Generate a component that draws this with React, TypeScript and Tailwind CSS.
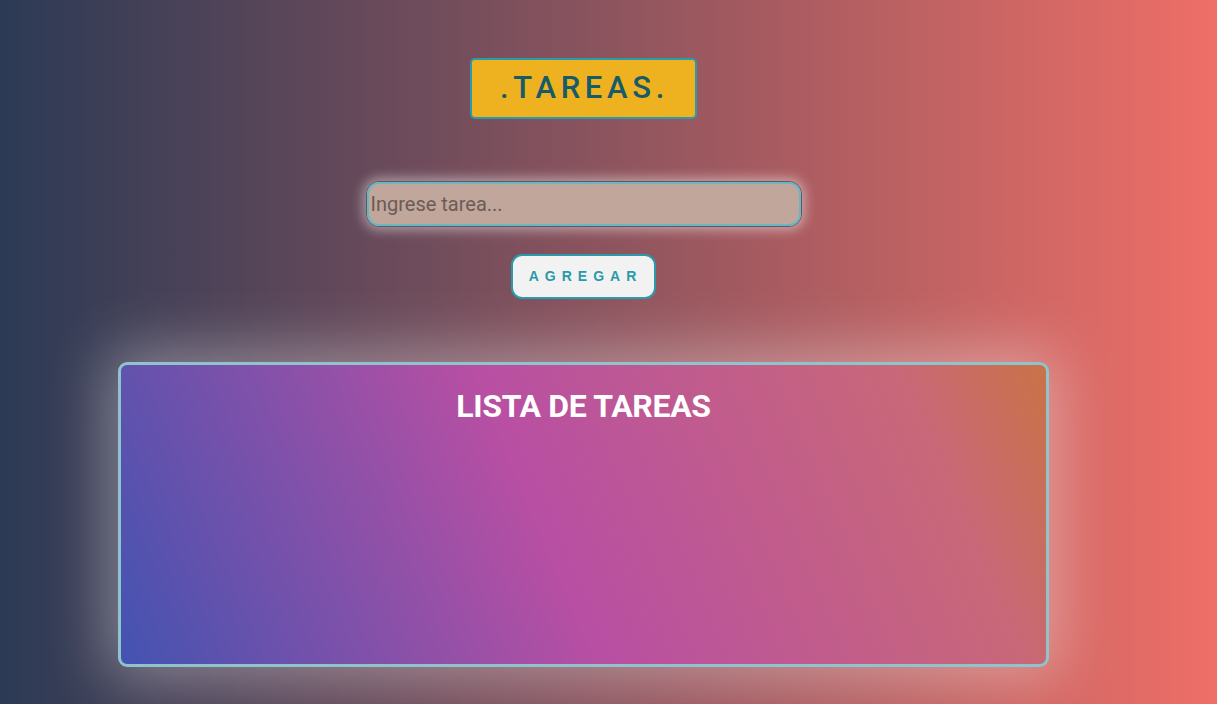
export default function App() {
    return (
        <div className="min-h-[704px] w-full overflow-hidden bg-[linear-gradient(to_right,#2c3a55,#8d545e_50%,#ee6f67)] font-['Roboto',sans-serif]">
            <div className="w-[1167px] flex flex-col items-center pt-[58px]">
                <h1 className="w-[227px] h-[61px] flex items-center justify-center bg-[#eeb120] border-2 border-[#2b9aaa] rounded-[5px] text-[31px] tracking-[0.15em] pl-[2px] text-[#175a68] font-medium">
                    .TAREAS.
                </h1>

                <input
                    type="text"
                    placeholder="Ingrese tarea..."
                    className="mt-[62px] w-[436px] h-[46px] px-[4px] bg-[#c0a69b] border border-[#5c5a5a] outline-2 outline-[#6bb6c4] -outline-offset-[3px] rounded-[13px] text-[20px] text-[#5f4d48] placeholder:text-[#6d5b55] shadow-[0_0_12px_3px_rgba(255,255,255,0.45)]"
                />

                <button className="mt-[27px] w-[145px] h-[45px] bg-[#f2f2f2] border-2 border-[#2a9aab] rounded-[11px] text-[14px] font-bold tracking-[0.43em] pl-[4px] text-[#2a9aab] font-['Liberation_Sans',Arial,sans-serif]">
                    AGREGAR
                </button>

                {/* task list */}
                <section className="mt-[63px] w-[931px] h-[305px] rounded-[9px] border-[3px] border-[#8fc4cc] bg-[linear-gradient(67deg,#4353b1,#b94fa3_46%,#c86878_86%,#c97346)] shadow-[0_0_60px_12px_rgba(255,255,255,0.35)] flex flex-col items-center">
                    <h2 className="mt-[17px] text-[32px] font-bold text-white tracking-[-0.01em]">LISTA DE TAREAS</h2>
                </section>
            </div>
        </div>
    );
}
